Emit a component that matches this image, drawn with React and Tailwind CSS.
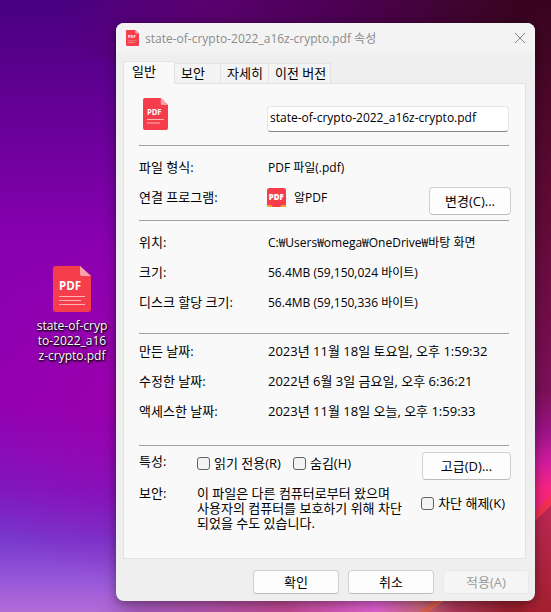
import React from 'react'

const FILE_NAME = 'state-of-crypto-2022_a16z-crypto.pdf'

const tabs = [
    { id: 'general', label: '일반', selected: true, width: 'w-[52px]' },
    { id: 'security', label: '보안', selected: false, width: 'w-[46px]' },
    { id: 'details', label: '자세히', selected: false, width: 'w-12' },
    { id: 'versions', label: '이전 버전', selected: false, width: 'w-[62px]' },
]

const location = [
    { label: '위치:', value: 'C:₩Users₩omega₩OneDrive₩바탕 화면' },
    { label: '크기:', value: '56.4MB (59,150,024 바이트)' },
    { label: '디스크 할당 크기:', value: '56.4MB (59,150,336 바이트)' },
]

const dates = [
    { label: '만든 날짜:', value: '2023년 11월 18일 토요일, 오후 1:59:32' },
    { label: '수정한 날짜:', value: '2022년 6월 3일 금요일, 오후 6:36:21' },
    { label: '액세스한 날짜:', value: '2023년 11월 18일 오늘, 오후 1:59:33' },
]

const SECURITY_NOTE = '이 파일은 다른 컴퓨터로부터 왔으며\n사용자의 컴퓨터를 보호하기 위해 차단\n되었을 수도 있습니다.'

function classNames(...classes) {
    return classes.filter(Boolean).join(' ')
}

function PdfIcon({ className, small }) {
    return (
        <svg viewBox="0 0 38 46" preserveAspectRatio="none" className={className} aria-hidden="true">
            <path d="M3 0H27L38 10V43Q38 46 35 46H3Q0 46 0 43V3Q0 0 3 0Z" fill="#f53d4c" />
            <path d="M27 0L38 10H29Q27 10 27 8Z" fill="#fba3ab" />
            <text x="6" y="24" fontSize="11.5" fontWeight="700" fill="#fff" fontFamily="'Open Sans', sans-serif">PDF</text>
            {small ? (
                <path d="M6 31H32M6 36H26" stroke="#fcb4ba" strokeWidth="1.5" />
            ) : (
                <path d="M6 30.5H32M6 34.5H28M6 38.5H32" stroke="#fcb4ba" strokeWidth="1" />
            )}
        </svg>
    )
}

function AppIcon() {
    return (
        <svg viewBox="0 0 19 19" className="-ml-px size-[19px]" aria-hidden="true">
            <rect width="19" height="19" rx="2.5" fill="#f53d4c" />
            <path d="M0 17H4L6 19H0ZM19 17H15L13 19H19Z" fill="#f5a623" />
            <text x="1.8" y="12" fontSize="7.8" fontWeight="800" fill="#fff" fontFamily="'Open Sans', sans-serif">PDF</text>
        </svg>
    )
}

function Wallpaper() {
    return (
        <svg viewBox="0 0 551 612" preserveAspectRatio="none" className="absolute inset-0 -z-10 size-full" aria-hidden="true">
            <defs>
                <linearGradient id="left" x1="0" y1="0" x2="0" y2="1">
                    <stop offset="0" stopColor="#480080" />
                    <stop offset="0.2" stopColor="#680098" />
                    <stop offset="0.4" stopColor="#8800b0" />
                    <stop offset="0.66" stopColor="#9000b2" />
                    <stop offset="0.8" stopColor="#7c1ac0" />
                    <stop offset="0.88" stopColor="#7838cc" />
                    <stop offset="0.95" stopColor="#9858d8" />
                    <stop offset="1" stopColor="#b46cd8" />
                </linearGradient>
                <radialGradient id="magenta" gradientUnits="userSpaceOnUse" cx="125" cy="400" r="180">
                    <stop offset="0" stopColor="#a000ac" stopOpacity="0.7" />
                    <stop offset="1" stopColor="#a000ac" stopOpacity="0" />
                </radialGradient>
                <linearGradient id="dark" gradientUnits="userSpaceOnUse" x1="60" y1="0" x2="525" y2="0">
                    <stop offset="0" stopColor="#5c0070" stopOpacity="0" />
                    <stop offset="0.3" stopColor="#5a0070" />
                    <stop offset="0.6" stopColor="#4c0054" />
                    <stop offset="0.85" stopColor="#400430" />
                    <stop offset="1" stopColor="#380420" />
                </linearGradient>
                <linearGradient id="right" gradientUnits="userSpaceOnUse" x1="530" y1="0" x2="540" y2="515">
                    <stop offset="0" stopColor="#380420" />
                    <stop offset="0.4" stopColor="#600a34" />
                    <stop offset="0.76" stopColor="#7c1058" />
                    <stop offset="0.84" stopColor="#9c1488" />
                    <stop offset="0.9" stopColor="#d41ca0" />
                    <stop offset="0.95" stopColor="#f82480" />
                </linearGradient>
                <linearGradient id="red" x1="0" y1="0" x2="0" y2="1">
                    <stop offset="0" stopColor="#bc2854" />
                    <stop offset="1" stopColor="#a42030" />
                </linearGradient>
                <linearGradient id="bottom" gradientUnits="userSpaceOnUse" x1="90" y1="0" x2="551" y2="0">
                    <stop offset="0" stopColor="#a860d0" stopOpacity="0" />
                    <stop offset="0.1" stopColor="#a058b8" />
                    <stop offset="0.28" stopColor="#b050a4" />
                    <stop offset="0.42" stopColor="#bc4890" />
                    <stop offset="0.62" stopColor="#dc60d0" />
                    <stop offset="0.72" stopColor="#c86478" />
                    <stop offset="0.79" stopColor="#a83858" />
                    <stop offset="0.9" stopColor="#982030" />
                    <stop offset="1" stopColor="#a02028" />
                </linearGradient>
            </defs>
            <rect width="551" height="612" fill="url(#left)" />
            <rect width="310" height="612" fill="url(#magenta)" />
            <rect x="60" width="491" height="60" fill="url(#dark)" />
            <rect x="525" width="26" height="530" fill="url(#right)" />
            <rect x="90" y="596" width="461" height="16" fill="url(#bottom)" />
            <path d="M525 531L551 505V612H525Z" fill="url(#red)" />
            <path d="M525 531L551 505V495L525 522Z" fill="#f03050" />
            <path d="M421 612L441 598M426 612L446 598" stroke="#e4603c" strokeWidth="2" />
        </svg>
    )
}

function Button({ children, className, disabled }) {
    return (
        <button
            type="button"
            disabled={disabled}
            className={classNames(
                disabled ? 'border-[#e8e8e8] bg-[#f5f5f5] text-[#9a9a9a]' : 'border-[#d0d0d0] border-b-[#bcbcbc] bg-[#fdfdfd]',
                'shrink-0 rounded border text-center',
                className
            )}
        >
            {children}
        </button>
    )
}

function Checkbox({ id, label }) {
    return (
        <div className="flex items-center gap-1">
            <input id={id} type="checkbox" className="size-[13px] appearance-none rounded-[3px] border border-[#626262] bg-[#f3f3f3]" />
            <label htmlFor={id} className="whitespace-nowrap">{label}</label>
        </div>
    )
}

function Row({ label, children, className }) {
    return (
        <div className="flex">
            <dt className="w-[129px] shrink-0">{label}</dt>
            <dd className={classNames('whitespace-nowrap', className)}>{children}</dd>
        </div>
    )
}

export default function App() {
    return (
        <div className="relative isolate flex min-h-screen items-start overflow-hidden font-['Open_Sans','Noto_Sans_CJK_KR',sans-serif] text-[13px] leading-[15px] text-black">
            <Wallpaper />
            <div className="flex w-[116px] shrink-0 flex-col items-end pt-[266px] pr-2">
                <div className="flex w-[72px] flex-col items-center gap-1.5">
                    <PdfIcon className="h-[46px] w-[38px]" />
                    <p className="text-center text-[12px] leading-[15px] break-all text-white [text-shadow:1px_1px_2px_#000,0_1px_2px_#000]">{FILE_NAME}</p>
                </div>
            </div>

            <main className="mt-[23px] mr-4 flex-1 overflow-hidden rounded-lg bg-[#efefef] shadow-[0_2px_12px_rgba(0,0,0,0.45)]">
                <header className="flex h-[30px] items-center bg-[#f3f3f3] px-2.5 text-[#8c8c8c]">
                    <PdfIcon small className="h-4 w-[13px]" />
                    <h1 className="ml-1.5 flex-1 text-[12px] leading-[15px] whitespace-nowrap">{FILE_NAME} 속성</h1>
                    <button type="button" aria-label="닫기">
                        <svg viewBox="0 0 10 10" className="size-2.5" fill="none" stroke="#858585">
                            <path d="M0 0L10 10M10 0L0 10" />
                        </svg>
                    </button>
                </header>

                <div className="pt-2 pr-[9px] pl-[7px]">
                    <div role="tablist" className="flex items-end">
                        {tabs.map((tab) => (
                            <button
                                key={tab.id}
                                type="button"
                                role="tab"
                                aria-selected={tab.selected}
                                className={classNames(
                                    tab.selected ? 'relative z-10 -mb-px h-[23px] border-l bg-[#f9f9f9] pb-1 pl-2' : 'h-5 bg-[#f3f3f3] pl-1.5',
                                    'shrink-0 border-t border-r border-[#e3e3e3] text-left whitespace-nowrap',
                                    tab.width
                                )}
                            >
                                {tab.label}
                            </button>
                        ))}
                    </div>

                    <section className="border border-[#e3e3e3] bg-[#f9f9f9] pr-4 pl-[15px]">
                        <div className="flex h-[62px] border-b border-[#a0a0a0] pt-3.5">
                            <div className="w-32 shrink-0 pl-1">
                                <PdfIcon small className="h-8 w-[25px]" />
                            </div>
                            <input
                                aria-label="파일 이름"
                                defaultValue={FILE_NAME}
                                className="mt-2 h-[26px] min-w-0 flex-1 rounded-sm border border-[#e6e6e6] border-b-[#868686] bg-white px-0.5 pb-1 text-[12px]"
                            />
                        </div>

                        <div className="flex h-[75px] items-start justify-between border-b border-[#a0a0a0] pt-3.5">
                            <dl className="space-y-[15px]">
                                <Row label="파일 형식:" className="text-[12px] leading-[15px]">PDF 파일(.pdf)</Row>
                                <Row label="연결 프로그램:" className="text-[12px] leading-[15px]">
                                    <span className="flex h-[15px] items-center gap-2"><AppIcon />알PDF</span>
                                </Row>
                            </dl>
                            <Button className="mt-[27px] -mr-0.5 h-7 w-[82px]">변경(C)...</Button>
                        </div>

                        <dl className="h-[113px] space-y-[15px] border-b border-[#a0a0a0] pt-3.5">
                            {location.map((item) => (
                                <Row key={item.label} label={item.label} className="text-[12px] leading-[15px]">{item.value}</Row>
                            ))}
                        </dl>

                        <dl className="h-28 space-y-[15px] border-b border-[#a0a0a0] pt-2.5">
                            {dates.map((item) => (
                                <Row key={item.label} label={item.label}>{item.value}</Row>
                            ))}
                        </dl>

                        <div className="flex h-10 items-start pt-1.5">
                            <div className="w-[58px] shrink-0 pt-0.5">특성:</div>
                            <div className="flex flex-1 gap-3 pt-1">
                                <Checkbox id="readonly" label="읽기 전용(R)" />
                                <Checkbox id="hidden" label="숨김(H)" />
                            </div>
                            <Button className="-mr-0.5 h-7 w-[89px]">고급(D)...</Button>
                        </div>

                        <div className="flex h-[72px] items-start">
                            <div className="w-[58px] shrink-0">보안:</div>
                            <p className="flex-1 whitespace-pre">{SECURITY_NOTE}</p>
                            <div className="pt-2.5 pr-1">
                                <Checkbox id="unblock" label="차단 해제(K)" />
                            </div>
                        </div>
                    </section>
                </div>

                <footer className="flex justify-end gap-[9px] px-1.5 pt-[11px] pb-[7px]">
                    <Button className="h-6 w-[86px]">확인</Button>
                    <Button className="h-6 w-[86px]">취소</Button>
                    <Button className="h-6 w-[86px]" disabled>적용(A)</Button>
                </footer>
            </main>
        </div>
    )
}
